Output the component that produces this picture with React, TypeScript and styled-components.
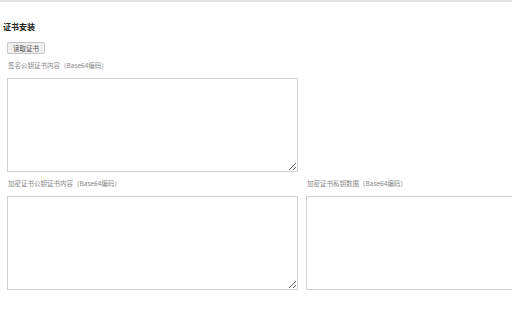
import styled, { createGlobalStyle } from "styled-components";

const GlobalStyle = createGlobalStyle`
  html, body {
    margin: 0;
    padding: 0;
    background: #fff;
  }
  body {
    font-family: "Noto Sans CJK SC", "Liberation Sans", sans-serif;
    color: #333;
    overflow: hidden;
  }
`;

const Page = styled.div`
  width: 512px;
  height: 320px;
  border-top: 2px solid #e4e4e4;
  box-sizing: border-box;
  padding: 18px 0 0 3px;
`;

const Title = styled.h3`
  margin: 0 0 8px;
  font-size: 8px;
  line-height: 14px;
  font-weight: bold;
  color: #222;
`;

const ReadButton = styled.button`
  margin-left: 4px;
  height: 12px;
  padding: 0 5px;
  font-family: inherit;
  font-size: 6.5px;
  line-height: 10px;
  color: #555;
  background: #efefef;
  border: 1px solid #c4c4c4;
  border-radius: 2px;
  display: block;
`;

const Grid = styled.div`
  display: grid;
  grid-template-columns: 291px 291px;
  column-gap: 8px;
  row-gap: 7px;
  padding-left: 4px;
  margin-top: 7px;
`;

const Field = styled.div`
  display: flex;
  flex-direction: column;
  gap: 8px;
`;

const Label = styled.label`
  font-size: 6.5px;
  line-height: 9px;
  color: #888;
  padding-left: 1px;
`;

const Area = styled.textarea`
  box-sizing: border-box;
  width: 291px;
  height: 94px;
  border: 1px solid #d0d0d0;
  resize: vertical;
  margin: 0;
  background: #fff;
`;

const Empty = styled.div``;

export default function App() {
  return (
    <>
      <GlobalStyle />
      <Page>
        <Title>证书安装</Title>
        <ReadButton type="button">读取证书</ReadButton>
        <Grid>
          <Field>
            <Label>签名公钥证书内容（Base64编码）</Label>
            <Area />
          </Field>
          <Empty />
          <Field>
            <Label>加密证书公钥证书内容（Base64编码）</Label>
            <Area />
          </Field>
          <Field>
            <Label>加密证书私钥数据（Base64编码）</Label>
            <Area />
          </Field>
        </Grid>
      </Page>
    </>
  );
}
